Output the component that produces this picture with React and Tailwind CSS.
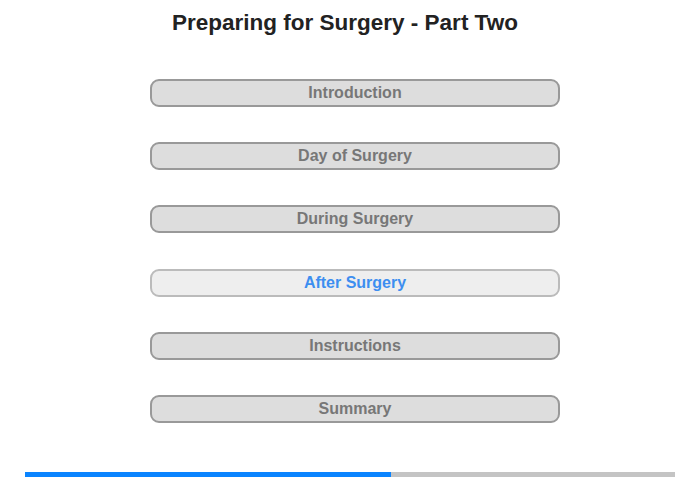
import React from 'react';

const sections = [
  { label: 'Introduction' },
  { label: 'Day of Surgery' },
  { label: 'During Surgery' },
  { label: 'After Surgery', active: true },
  { label: 'Instructions' },
  { label: 'Summary' },
];

const App = () => {
  return (
    <div className="w-[700px] h-[480px] bg-white flex flex-col items-center font-['Liberation_Sans',Arial,sans-serif]">
      <h1 className="mt-[9px] mr-[10px] h-[28px] text-[22.5px] leading-[28px] font-bold text-[#222]">
        Preparing for Surgery - Part Two
      </h1>

      <div className="mt-[42px] ml-[10px] flex flex-col gap-[35.2px]">
        {sections.map((s) => (
          <button
            key={s.label}
            className={`w-[410px] h-[28px] rounded-[9px] border-2 text-[16px] font-bold leading-none ${
              s.active
                ? 'bg-[#eeeeee] border-[#bbbbbb] text-[#3d8ef0]'
                : 'bg-[#dddddd] border-[#999999] text-[#777777]'
            }`}
          >
            {s.label}
          </button>
        ))}
      </div>

      <div className="mt-auto mb-[3px] w-[650px] h-[5px] flex">
        <div className="w-[366px] bg-[#0a84ff]" />
        <div className="flex-1 bg-[#c4c4c4]" />
      </div>
    </div>
  );
};

export default App;
